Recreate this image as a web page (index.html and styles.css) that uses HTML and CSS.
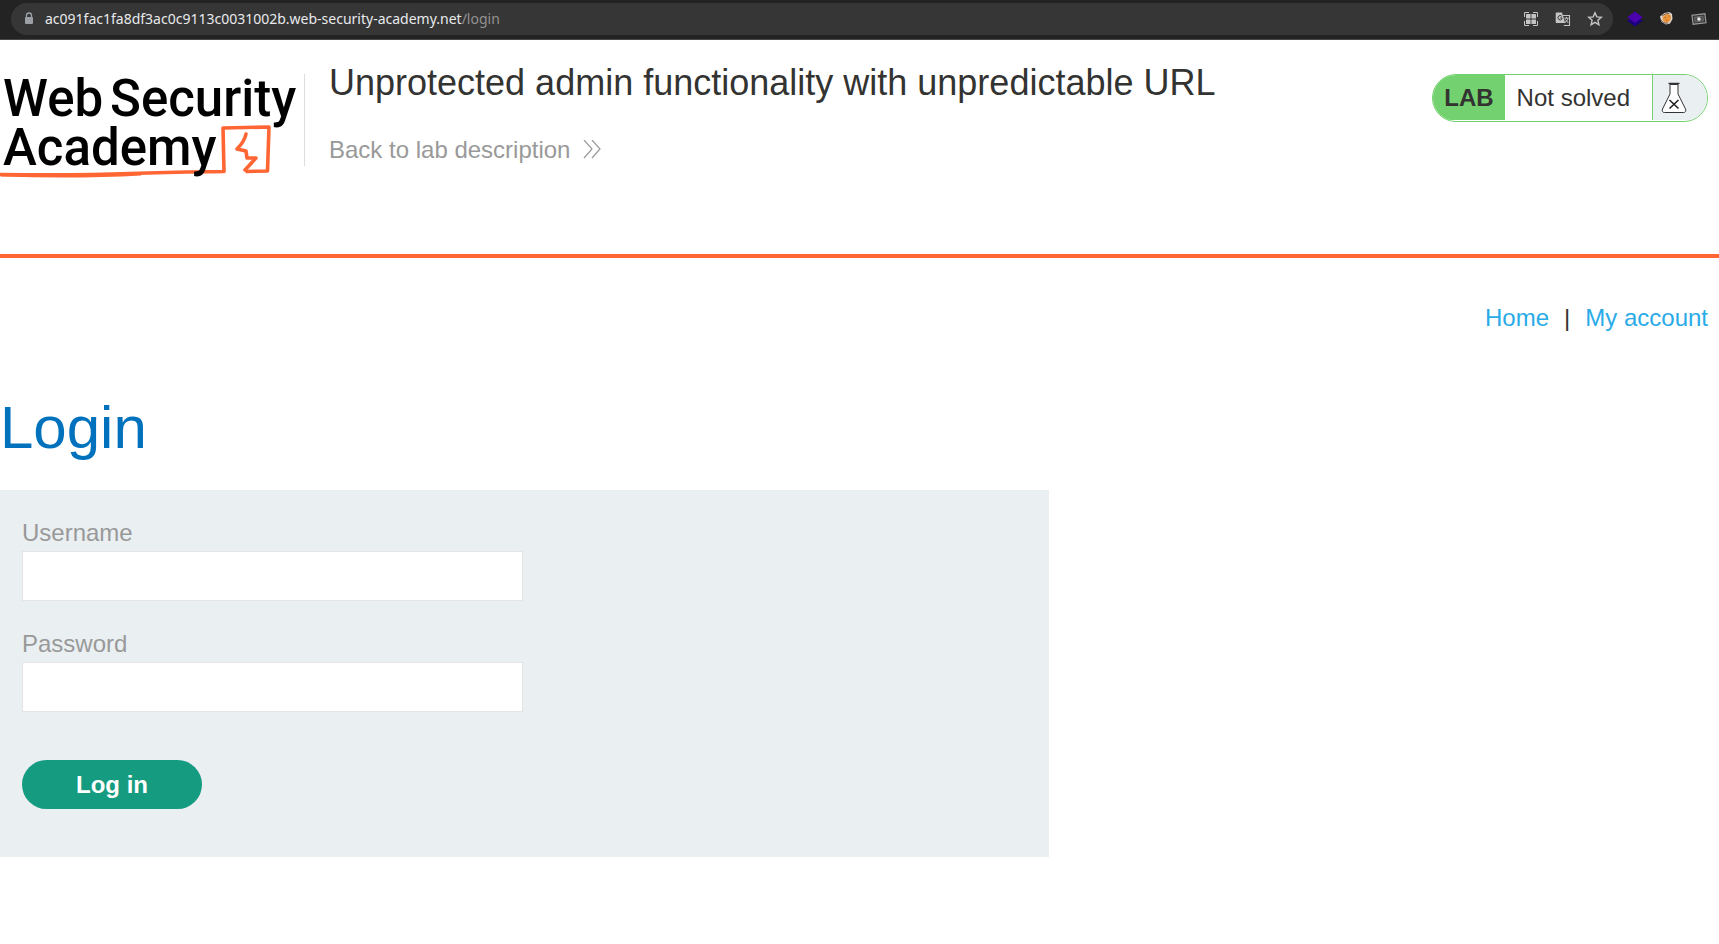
FILE: index.html
```html
<!DOCTYPE html>
<html lang="en">
<head>
<meta charset="utf-8">
<meta name="viewport" content="width=device-width, initial-scale=1">
<title>Unprotected admin functionality with unpredictable URL</title>
<link rel="stylesheet" href="styles.css">
</head>
<body>
<div class="browser-bar">
  <div class="address">
    <svg class="lock" viewBox="0 0 10 14" aria-hidden="true"><path d="M2.5 6V3.5a2.5 2.5 0 0 1 5 0V6" fill="none" stroke="#9aa0a6" stroke-width="1.3"/><rect x="1" y="5" width="8" height="7" rx="1" fill="#9aa0a6"/></svg>
    <span class="url">ac091fac1fa8df3ac0c9113c0031002b.web-security-academy.net<span class="path">/login</span></span>
    <button class="tool" aria-label="QR code"><svg viewBox="0 0 16 16"><path d="M1.5 6V1.5H6M10 1.5h4.500V6M14.500 10v4.500H10M6 14.500H1.500V10" fill="none" stroke="#c4c4c4"/><g fill="#c4c4c4"><rect x="3" y="3" width="4.600" height="4.600" rx=".5"/><rect x="8.400" y="3" width="4.600" height="4.600" rx=".5"/><rect x="3" y="8.400" width="4.600" height="4.600" rx=".5"/><rect x="8.400" y="8.400" width="4.600" height="4.600" rx=".5"/></g></svg></button>
    <button class="tool" aria-label="Translate"><svg viewBox="0 0 16 16"><path d="M8 4.500h6.500v10H8" fill="none" stroke="#c4c4c4" stroke-width="1.100"/><path d="M1.500 1.500H7l3.200 10.500H1.500a.8.8 0 0 1-.8-.8V2.300a.8.800 0 0 1 .8-.8z" fill="#c4c4c4"/><path d="M6.800 5.200a2.200 2.200 0 1 0 .1 2.900V6.900H5.200M7.500 12l1 2.500L10.200 12" fill="none" stroke="#363636"/><path d="M9.300 7.200h4.400M11.500 6v1.200M12.900 7.400c-.5 1.900-1.500 3.200-3 4.200M10.300 8.500l3 3.500" fill="none" stroke="#c4c4c4"/></svg></button>
    <button class="tool" aria-label="Bookmark this page"><svg viewBox="0 0 16 16"><path d="M8 1.800l1.800 4.100 4.500.4-3.400 3 1 4.400L8 11.400l-3.900 2.300 1-4.400-3.400-3 4.500-.4z" fill="none" stroke="#c4c4c4" stroke-width="1.400"/></svg></button>
  </div>
  <div class="extensions">
    <button class="tool" aria-label="Layers extension"><svg viewBox="0 0 16 16"><path d="M.3 9.800L8 5l7.700 4.800L8 15.600z" fill="#1c0080"/><path d="M.3 6.300L8 .5l7.700 5.800L8 12z" fill="#4b04ad"/></svg></button>
    <button class="tool" aria-label="Cookie extension"><svg viewBox="0 0 16 16"><path d="M1 5.500L5.500 2l5-1L13 3l.5 5-2.500 4.500-4 1L2.500 11z" fill="#ded8ce"/><path d="M3.500 6.500C5.500 3.500 8.500 2.500 11.500 4c1.500 3 .3 6-2.500 7.500C5.500 12 3 9.500 3.500 6.500z" fill="#e9963e"/><path d="M2 9c1.500 2.500 3.500 3.500 7 3M3 5l3-1.800 4.500-1" fill="none" stroke="#5a3a22" stroke-width=".8"/><path d="M5.500 6.500H7M9 5h1.500M7 9h1.500" stroke="#b8641f"/></svg></button>
    <button class="tool" aria-label="Capture extension"><svg viewBox="0 0 16 16"><g transform="rotate(-7 8 8)"><rect x="1.500" y="3.500" width="13" height="9" fill="#333" stroke="#999" stroke-width="1.200"/><rect x="3.800" y="5.600" width="8.400" height="4.800" fill="#4a4a4a" stroke="#777" stroke-width=".8"/><circle cx="8" cy="8" r="1.800" fill="#e3e3e3"/></g></svg></button>
  </div>
</div>

<header class="lab-header">
  <a class="logo" href="#" aria-label="Web Security Academy">
    <svg viewBox="0 -10 304 120" aria-hidden="true">
      <path d="M0 100.500C45 101 90 101 130 99.500S185 98 224 97.500L223 54l46-1-1.500 44-22 .5" fill="none" stroke="#ff6633" stroke-width="3.600" stroke-linejoin="round"/>
      <path d="M1 101.500c45 1.500 95 1.500 140-1" fill="none" stroke="#ff6633" stroke-width="2"/>
      <path d="M246 60c-1 5-3 9-9 15l9 2 1 7h9L245 96" fill="none" stroke="#ff6633" stroke-width="3.600" stroke-linejoin="round" stroke-linecap="round"/>
      <g class="logo-text"><text x="3" y="42">Web</text><text x="110" y="42">Security</text><text x="3" y="91">Academy</text></g>
    </svg>
  </a>
  <div class="title-block">
    <h2>Unprotected admin functionality with unpredictable URL</h2>
    <a class="back" href="#">Back to lab description
      <svg viewBox="0 0 18 20" aria-hidden="true"><path d="M1 0l8 9-8 9M9 0l8 9-8 9" fill="none" stroke="#999" stroke-width="1.200"/></svg>
    </a>
  </div>
  <div class="status">
    <span class="tag">LAB</span>
    <span class="state">Not solved</span>
    <span class="flask"><svg viewBox="0 0 26 32" aria-hidden="true"><path d="M9 2.500V12L1.500 27c-.8 2 .1 3.500 1.800 3.500h19.400c1.700 0 2.600-1.500 1.800-3.500L17 12V2.500z" fill="#fff" stroke="#333"/><path d="M7.500 1.500h11" stroke="#333" stroke-width="1.500"/><path d="M8.500 18l9 8.500M17.500 18l-9 8.500" stroke="#222" stroke-width="1.600"/></svg></span>
  </div>
</header>

<main>
  <nav class="top-links"><a href="#">Home</a><span>|</span><a href="#">My account</a></nav>
  <h1>Login</h1>
  <form class="login-form">
    <label for="username">Username</label>
    <input id="username" name="username" type="text">
    <label for="password">Password</label>
    <input id="password" name="password" type="password">
    <button class="submit" type="button">Log in</button>
  </form>
</main>
</body>
</html>
```
FILE: styles.css
```css
* { box-sizing: border-box; }

body {
  margin: 0;
  background: #fff;
  color: #333332;
  font-family: "Liberation Sans", Arial, sans-serif;
  font-size: 24px;
  line-height: 28px;
}

a { text-decoration: none; }

svg { display: block; }

/* Browser toolbar */
.browser-bar {
  display: flex;
  align-items: center;
  gap: 14px;
  height: 40px;
  padding: 0 12px 2px 11px;
  background: #232323;
  border-bottom: 1px solid #4a4648;
}

.address {
  display: flex;
  flex: 1;
  align-items: center;
  gap: 16px;
  height: 32px;
  padding: 0 10px 0 13px;
  border-radius: 16px;
  background: #363636;
}

.lock { width: 10px; height: 14px; }

.url {
  flex: 1;
  margin-left: -5px;
  color: #e8eaed;
  font: 14px/20px "Noto Sans", sans-serif;
}

.path { color: #919191; }

.tool {
  width: 16px;
  height: 16px;
  padding: 0;
  border: 0;
  background: none;
}

.extensions { display: flex; gap: 16px; }

/* Lab header */
.lab-header {
  display: flex;
  align-items: flex-start;
  height: 218px;
  padding-right: 11px;
  border-bottom: 4px solid #ff6633;
}

.logo {
  width: 305px;
  height: 92px;
  margin-top: 34px;
  border-right: 1px solid #ddd;
}

.logo svg { width: 304px; height: 120px; margin-top: -10px; }

.logo-text {
  fill: #000;
  font: 500 51px Roboto, sans-serif;
}

.title-block {
  flex: 1;
  padding: 22px 0 0 24px;
}

h2 {
  margin: 0;
  font-size: 36px;
  font-weight: 400;
  line-height: 42px;
}

.back {
  display: inline-flex;
  align-items: center;
  gap: 13px;
  margin-top: 32px;
  color: #999;
}

.back svg { width: 18px; height: 20px; }

.status {
  display: flex;
  height: 48px;
  margin-top: 34px;
  padding-bottom: 1px;
  overflow: hidden;
  border: 1px solid #73d26f;
  border-radius: 24px;
  line-height: 46px;
}

.tag {
  padding: 0 11px;
  background: #73d26f;
  font-weight: 700;
}

.state { padding: 0 22px 0 12px; }

.flask {
  display: flex;
  align-items: center;
  width: 55px;
  padding-left: 8px;
  border-left: 1px solid #73d26f;
  background: #eaeff2;
}

.flask svg { width: 26px; height: 32px; }

/* Page content */
.top-links {
  display: flex;
  justify-content: flex-end;
  gap: 15px;
  padding: 46px 11px 0 0;
}

.top-links a { color: #29abe8; }

h1 {
  margin: 62px 0 28px;
  color: #0071bc;
  font-size: 60px;
  font-weight: 400;
  line-height: 68px;
}

.login-form {
  width: 61%;
  padding: 28px 22px 48px;
  background: #eaeff2;
}

.login-form label {
  display: block;
  padding: 1px 0 4px;
  color: #999;
}

.login-form input {
  display: block;
  width: 501px;
  max-width: 100%;
  height: 50px;
  margin-bottom: 28px;
  padding: 0 12px;
  border: 1px solid #e4e4e4;
  background: #fff;
  font: inherit;
}

.submit {
  display: block;
  width: 180px;
  height: 49px;
  margin-top: 48px;
  border: 0;
  border-radius: 25px;
  background: #159b80;
  color: #fff;
  font: inherit;
  font-weight: 700;
}
```
